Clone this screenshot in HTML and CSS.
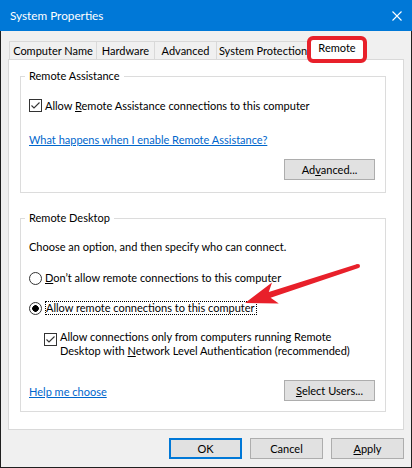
FILE: index.html
```html
<!DOCTYPE html>
<html lang="en">
<head>
<meta charset="utf-8">
<title>System Properties</title>
<link rel="stylesheet" href="styles.css">
</head>
<body>
<div class="window">
  <div class="titlebar">
    <span class="title">System Properties</span>
    <svg class="close" width="10" height="10" viewBox="0 0 10 10"><path d="M0.5 0.5L9.5 9.5M9.5 0.5L0.5 9.5" stroke="#fff" stroke-width="1.1" fill="none"/></svg>
  </div>
  <div class="tabs">
    <div class="tab tab-cn">Computer Name</div>
    <div class="tab tab-hw">Hardware</div>
    <div class="tab tab-adv">Advanced</div>
    <div class="tab tab-sp">System Protection</div>
    <div class="tab tab-sel">Remote</div>
  </div>
  <div class="panel">
    <div class="group group-ra">
      <div class="legend">Remote Assistance</div>
      <div class="row cbrow">
        <span class="checkbox"><svg width="11" height="11" viewBox="0 0 11 11"><path d="M1.5 5.5L4 8L9.5 2.5" stroke="#333" stroke-width="1.1" fill="none"/></svg></span>
        <span>Allow <u>R</u>emote Assistance connections to this computer</span>
      </div>
      <a class="link link-ra" href="#">What happens when I enable Remote Assistance?</a>
      <div class="btnrow btnrow-ra">
        <span class="btn btn-wide">Ad<u>v</u>anced...</span>
      </div>
    </div>
    <div class="group group-rd">
      <div class="legend">Remote Desktop</div>
      <div class="choose">Choose an option, and then specify who can connect.</div>
      <div class="row radrow radrow-1">
        <span class="radio"></span>
        <span><u>D</u>on’t allow remote connections to this computer</span>
      </div>
      <div class="row radrow radrow-2">
        <span class="radio checked"></span>
        <span class="focus">Allow remote connections to this computer</span>
      </div>
      <div class="nla">
        <span class="checkbox"><svg width="11" height="11" viewBox="0 0 11 11"><path d="M1.5 5.5L4 8L9.5 2.5" stroke="#333" stroke-width="1.1" fill="none"/></svg></span>
        <span class="nla-text">Allow connections only from computers running Remote<br>Desktop with <u>N</u>etwork Level Authentication (recommended)</span>
      </div>
      <div class="btnrow btnrow-rd">
        <a class="link link-help" href="#">Help me choose</a>
        <span class="btn btn-wide"><u>S</u>elect Users...</span>
      </div>
    </div>
  </div>
  <div class="footer">
    <span class="btn btn-ok">OK</span>
    <span class="btn">Cancel</span>
    <span class="btn"><u>A</u>pply</span>
  </div>
  <svg class="annotation" width="412" height="468" viewBox="0 0 412 468">
    <polygon fill="#E8202A" points="245,303 272,282.6 268.8,292.1 357.4,264.1 358.6,267.9 270.6,297.8 278.8,303.5"/>
    <circle cx="358" cy="266" r="2" fill="#E8202A"/>
  </svg>
</div>
</body>
</html>
```
FILE: styles.css
```css
html, body {
  margin: 0;
  padding: 0;
  background: #F0F0F0;
}
body {
  font-family: Lato, "Liberation Sans", Arial, sans-serif;
  font-size: 11px;
  color: #000;
}
.window {
  position: relative;
  width: 412px;
  height: 468px;
  box-sizing: border-box;
  border: 1px solid #1f1f1f;
  border-top: none;
  background: #F0F0F0;
  display: flex;
  flex-direction: column;
}
.titlebar {
  height: 31px;
  margin: 0 -1px;
  background: #0078D7;
  color: #fff;
  display: flex;
  align-items: center;
  justify-content: space-between;
  padding: 0 10px 0 10px;
  font-size: 11.75px;
}
.title {
  line-height: 14px;
  margin-top: 1px;
}
.close {
  display: block;
}
.tabs {
  height: 28px;
  display: flex;
  align-items: flex-end;
  padding-left: 8px;
  position: relative;
  z-index: 2;
}
.tab {
  height: 18px;
  box-sizing: border-box;
  border: 1px solid #D9D9D9;
  border-bottom: none;
  background: #F0F0F0;
  display: flex;
  align-items: center;
  justify-content: center;
  margin-left: -1px;
  white-space: nowrap;
  line-height: 14px;
}
.tab-cn { width: 88px; margin-left: 0; }
.tab-hw { width: 59px; }
.tab-adv { width: 63px; }
.tab-sp { width: 94px; }
.tab-sel {
  width: 52px;
  height: 19px;
  margin-left: 1px;
  margin-bottom: 0;
  background: #fff;
  border: none;
  padding-bottom: 3px;
  outline: 4px solid #E8202A;
  border-radius: 2px;
}
.panel {
  margin: 0 7px;
  height: 371px;
  box-sizing: border-box;
  background: #fff;
  border: 1px solid #D9D9D9;
  padding: 16px 17px 0 11px;
}
.group {
  border: 1px solid #DCDCDC;
  padding: 0 10px 12px 8px;
  display: flex;
  flex-direction: column;
  align-items: flex-start;
}
.group-rd {
  margin-top: 25px;
  padding-bottom: 10px;
}
.legend {
  margin: -8px 0 0 -4px;
  padding: 0 4px;
  background: #fff;
  line-height: 14px;
}
.row {
  display: flex;
  align-items: center;
}
.cbrow {
  height: 13px;
  margin-top: 16px;
  line-height: 13px;
  gap: 3px;
}
.checkbox {
  width: 13px;
  height: 13px;
  box-sizing: border-box;
  border: 1px solid #333;
  background: #fff;
  display: flex;
  align-items: center;
  justify-content: center;
  flex: none;
}
.checkbox svg {
  display: block;
}
.link {
  color: #0066CC;
  text-decoration: underline;
  line-height: 14px;
}
.link-ra {
  margin-top: 21px;
}
.btnrow {
  align-self: stretch;
  display: flex;
  justify-content: flex-end;
}
.btnrow-ra {
  margin-top: 12px;
}
.btnrow-rd {
  margin-top: 22px;
  justify-content: space-between;
  align-items: flex-end;
}
.link-help {
  margin-bottom: 2px;
}
.btn {
  width: 73px;
  height: 21px;
  box-sizing: border-box;
  border: 1px solid #ADADAD;
  background: #E1E1E1;
  display: flex;
  align-items: center;
  justify-content: center;
  line-height: 14px;
  white-space: nowrap;
}
.btn-wide {
  width: 91px;
}
.btn-ok {
  border: 2px solid #0078D7;
}
.choose {
  margin-top: 15px;
  line-height: 14px;
}
.radrow {
  height: 14px;
  line-height: 14px;
  gap: 3px;
}
.radrow-1 {
  margin-top: 17px;
}
.radrow-2 {
  margin-top: 16px;
}
.radio {
  width: 13px;
  height: 13px;
  box-sizing: border-box;
  border: 1px solid #333;
  border-radius: 50%;
  background: #fff;
  flex: none;
}
.radio.checked {
  background: radial-gradient(circle, #000 0 3px, #fff 3.6px);
}
.focus {
  border: 1px dotted #000;
  line-height: 12px;
  padding: 0 1px 0 0;
}
.nla {
  margin-top: 15px;
  margin-left: 15px;
  display: flex;
  align-items: flex-start;
  gap: 3px;
}
.nla .checkbox {
  margin-top: 3px;
}
.nla-text {
  line-height: 14px;
}
.footer {
  margin-top: 8px;
  padding-right: 7px;
  display: flex;
  justify-content: flex-end;
  gap: 8px;
}
.annotation {
  position: absolute;
  left: -1px;
  top: 0;
  pointer-events: none;
  z-index: 5;
}
u {
  text-decoration-thickness: 1px;
  text-underline-offset: 1px;
}
```
